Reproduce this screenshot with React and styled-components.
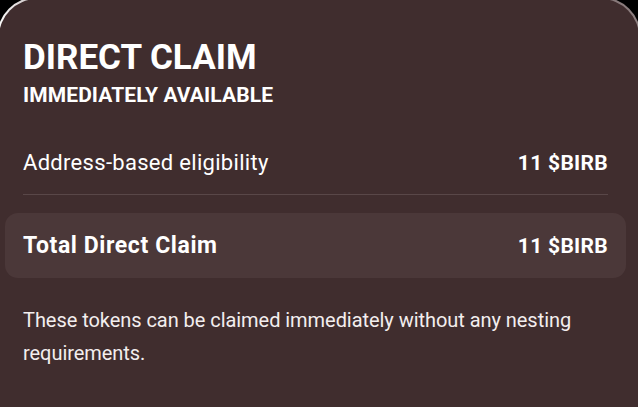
import React from "react";
import styled, { createGlobalStyle } from "styled-components";

const Global = createGlobalStyle`
  html, body { margin: 0; padding: 0; background: #000; }
  body { width: 638px; height: 407px; overflow: hidden; }
`;

const Card = styled.section`
  box-sizing: border-box;
  width: 644px;
  min-height: 440px;
  margin: -3px 0 0 -3px;
  padding: 39px 31px 0 24px;
  border: 2px solid transparent;
  border-bottom: none;
  border-radius: 40px 40px 0 0;
  background:
    linear-gradient(#402d2e, #402d2e) padding-box,
    linear-gradient(90deg, #ffffff 0%, #d8d2d2 4%, #7d6d6e 14%, #5e4d4e 50%, #7a6b6c 90%, #8f8182 100%) border-box;
  color: #fff;
  font-family: Roboto, "Noto Sans", sans-serif;
`;

const Title = styled.h1`
  margin: 0;
  font-size: 35px;
  line-height: 40px;
  font-weight: 700;
  letter-spacing: 0;
`;

const Subtitle = styled.h2`
  margin: 5px 0 0;
  font-size: 21px;
  line-height: 24px;
  font-weight: 700;
  letter-spacing: 0.1px;
`;

const Row = styled.div`
  display: flex;
  justify-content: space-between;
  align-items: baseline;
  margin-top: 43px;
  padding-bottom: 18px;
  border-bottom: 1px solid #594748;
`;

const TotalBox = styled.div`
  display: flex;
  justify-content: space-between;
  align-items: center;
  height: 65px;
  margin: 18px -18px 0;
  padding: 0 18px;
  border-radius: 13px;
  background: #4b3839;
`;

const Label = styled.span`
  font-size: ${(p) => (p.$bold ? 23 : 22)}px;
  line-height: 26px;
  font-weight: ${(p) => (p.$bold ? 700 : 400)};
  letter-spacing: ${(p) => (p.$bold ? "0.6px" : "0.3px")};
`;

const Amount = styled.span`
  font-size: 21px;
  line-height: 26px;
  font-weight: 700;
  letter-spacing: 0.3px;
`;

const Note = styled.p`
  margin: 26px 0 0;
  font-size: 20px;
  line-height: 33px;
  letter-spacing: -0.05px;
  color: #f3eeee;
`;

export default function App() {
  return (
    <>
      <Global />
      <Card>
        <Title>DIRECT CLAIM</Title>
        <Subtitle>IMMEDIATELY AVAILABLE</Subtitle>
        <Row>
          <Label>Address-based eligibility</Label>
          <Amount>11 $BIRB</Amount>
        </Row>
        <TotalBox>
          <Label $bold>Total Direct Claim</Label>
          <Amount>11 $BIRB</Amount>
        </TotalBox>
        <Note>
          These tokens can be claimed immediately without any nesting requirements.
        </Note>
      </Card>
    </>
  );
}
